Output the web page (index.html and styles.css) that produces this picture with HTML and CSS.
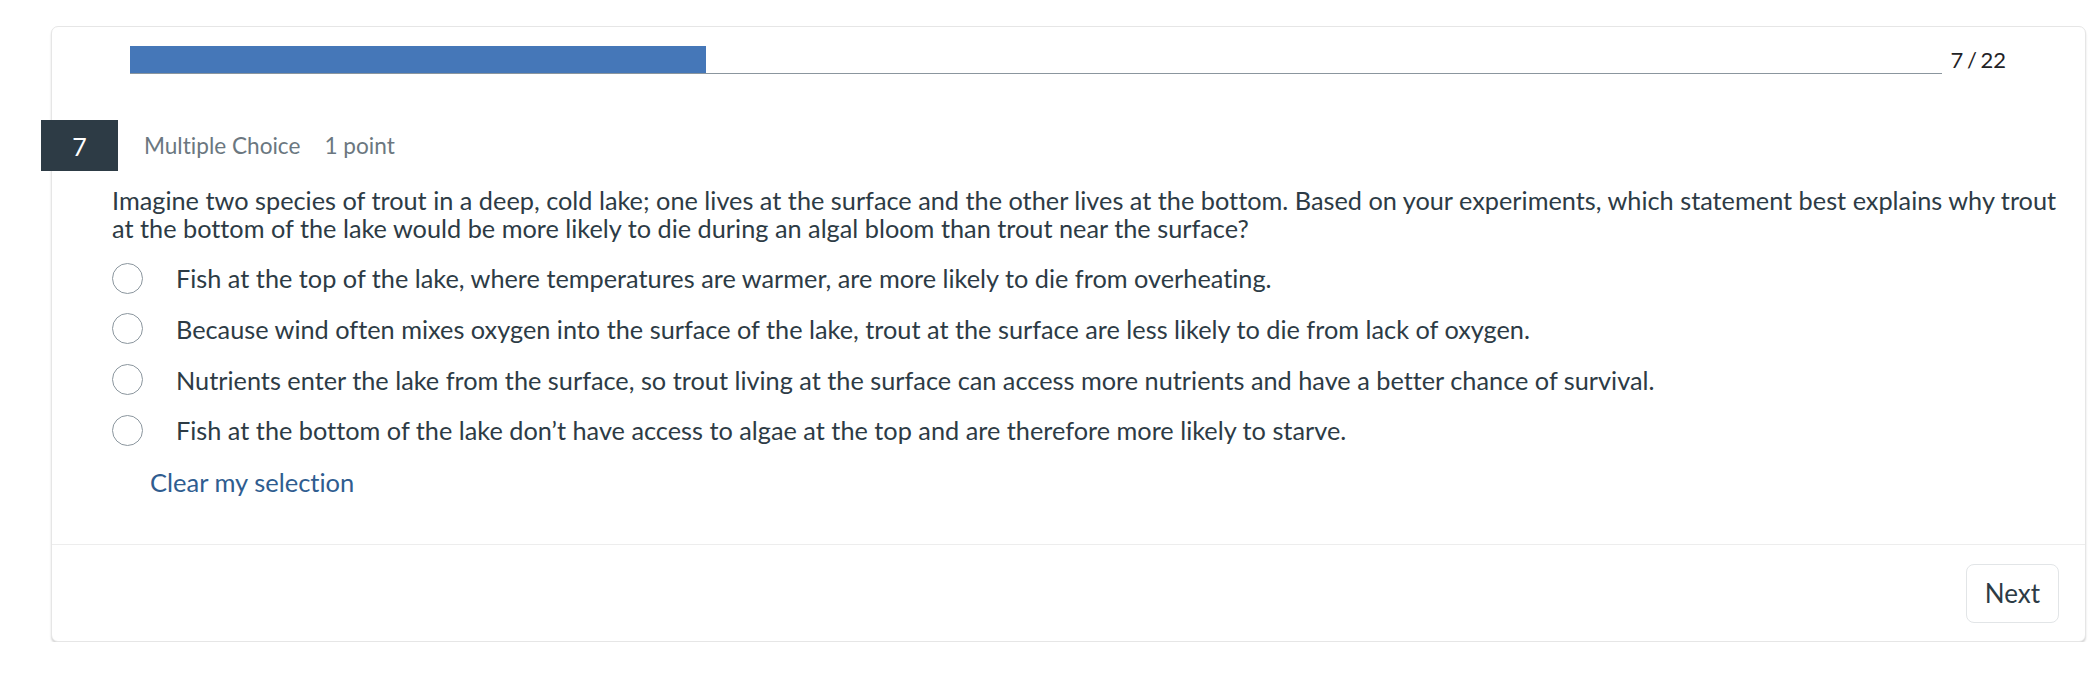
FILE: index.html
```html
<!DOCTYPE html>
<html lang="en">
<head>
<meta charset="utf-8">
<title>Quiz</title>
<link rel="stylesheet" href="styles.css">
</head>
<body>
<div class="card">
  <div class="progress-row">
    <div class="track"><div class="fill" style="width:31.82%"></div></div>
    <div class="counter">7 / 22</div>
  </div>
  <div class="q-header">
    <div class="q-num">7</div>
    <div class="q-meta"><span>Multiple Choice</span><span class="pts">1 point</span></div>
  </div>
  <div class="q-text">Imagine two species of trout in a deep, cold lake; one lives at the surface and the other lives at the bottom. Based on your experiments, which statement best explains why trout at the bottom of the lake would be more likely to die during an algal bloom than trout near the surface?</div>
  <div class="options">
    <label class="option"><span class="radio"></span><span class="opt-text">Fish at the top of the lake, where temperatures are warmer, are more likely to die from overheating.</span></label>
    <label class="option"><span class="radio"></span><span class="opt-text">Because wind often mixes oxygen into the surface of the lake, trout at the surface are less likely to die from lack of oxygen.</span></label>
    <label class="option"><span class="radio"></span><span class="opt-text">Nutrients enter the lake from the surface, so trout living at the surface can access more nutrients and have a better chance of survival.</span></label>
    <label class="option"><span class="radio"></span><span class="opt-text">Fish at the bottom of the lake don’t have access to algae at the top and are therefore more likely to starve.</span></label>
  </div>
  <div class="clear-row"><a class="clear-link">Clear my selection</a></div>
  <div class="footer">
    <button class="next-btn">Next</button>
  </div>
</div>
</body>
</html>
```

FILE: styles.css
```css
* { box-sizing: border-box; }
html, body { margin: 0; padding: 0; background: #ffffff; }
body {
  font-family: Lato, "Open Sans", "Liberation Sans", sans-serif;
  color: #2d3b45;
  padding: 26px 8px 0 51px;
  font-variant-ligatures: none;
}
.card {
  width: 2035px;
  height: 616px;
  border: 1px solid #e6e6e6;
  border-radius: 7px;
  box-shadow: 0 2px 2px rgba(0, 0, 0, 0.16);
  background: #fff;
  display: flex;
  flex-direction: column;
}
.progress-row {
  display: flex;
  align-items: center;
  padding: 19px 79px 0 78px;
}
.track {
  flex: 1;
  height: 28px;
  border-bottom: 1px solid #8b969e;
}
.fill {
  height: 27px;
  background: #4577b8;
}
.counter {
  margin-left: 9px;
  font-size: 22px;
  line-height: 28px;
  color: #1f2326;
  white-space: nowrap;
  word-spacing: -2px;
}
.q-header {
  display: flex;
  align-items: center;
  margin: 46px 0 0 -11px;
}
.q-num {
  width: 77px;
  height: 51px;
  background: #2d3b45;
  color: #fff;
  font-size: 25px;
  display: flex;
  align-items: center;
  justify-content: center;
}
.q-meta {
  margin-left: 26px;
  font-size: 22.6px;
  color: #6b7780;
  display: flex;
  gap: 24px;
}
.q-text {
  margin: 15px 14px 0 60px;
  font-size: 25.3px;
  line-height: 28px;
}
.options {
  margin: 11px 0 0 60px;
  display: flex;
  flex-direction: column;
}
.option {
  display: flex;
  align-items: center;
  height: 50.67px;
  font-size: 25.3px;
  line-height: 28px;
}
.radio {
  width: 31px;
  height: 31px;
  border: 1.2px solid #8b969e;
  border-radius: 50%;
  flex: none;
}
.opt-text { margin-left: 33px; }
.clear-row {
  margin: 12px 0 0 98px;
  font-size: 25.5px;
  line-height: 28px;
}
.clear-link { color: #2f5d90; }
.footer {
  margin-top: 48px;
  border-top: 1px solid #ededed;
  display: flex;
  justify-content: flex-end;
  padding: 19px 26px 0 0;
}
.next-btn {
  width: 93px;
  height: 59px;
  border: 1px solid #e2e5e7;
  border-radius: 8px;
  background: #fff;
  font-family: Lato, "Open Sans", sans-serif;
  font-size: 26px;
  color: #2d3b45;
  padding: 0;
}
```
